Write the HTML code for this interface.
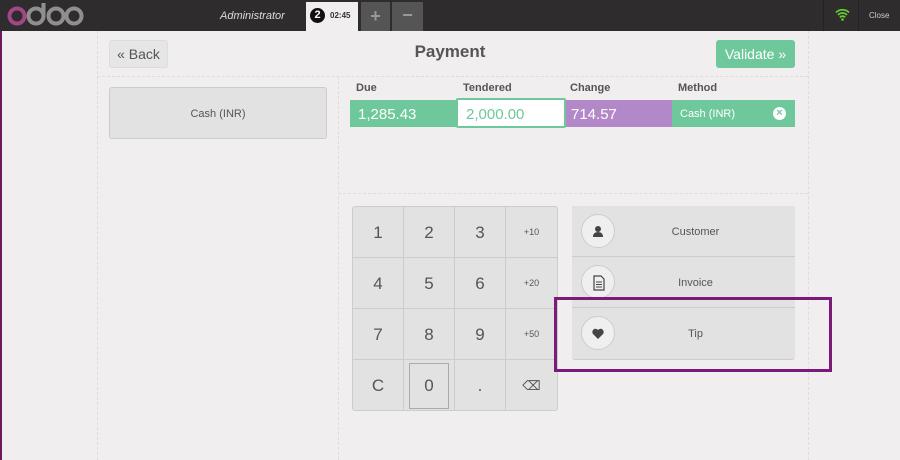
<!DOCTYPE html>
<html><head><style>
*{box-sizing:border-box;margin:0;padding:0}
body{width:900px;height:460px;overflow:hidden;background:#f0eeee;font-family:"Liberation Sans",sans-serif;position:relative;color:#555}
.a{position:absolute}
.top{left:0;top:0;width:900px;height:31px;background:#2e2c2c}
.dv{border-left:1px dashed #ddd}
.dh{border-top:1px dashed #ddd}
.key{position:absolute;width:51px;height:51px;border-right:1px solid #ccc;border-bottom:1px solid #ccc;text-align:center;line-height:51px;font-size:17px;color:#555}
.btn{position:absolute;left:572px;width:223px;height:51px;border-bottom:1px solid #ccc;background:#e2e2e2}
.btn .c{position:absolute;left:9px;top:8px;width:34px;height:34px;border-radius:50%;background:#efefef;border:1px solid #ccc}
.btn span{position:absolute;left:0;right:0;text-align:center;top:20px;font-size:11px;color:#555;padding-left:24px}
</style></head><body>
<div class="a" style="left:0;top:31px;width:2px;height:429px;background:#6c1a5e"></div>
<div class="a top"></div>
<svg class="a" style="left:0;top:0" width="90" height="31" viewBox="0 0 90 31">
<g fill="none" stroke-width="4"><circle cx="17" cy="16" r="7.5" stroke="#a24689"/><circle cx="36" cy="16" r="7.5" stroke="#8f8f8f"/><path d="M43.5 3v13" stroke="#8f8f8f"/><circle cx="56" cy="16" r="7.5" stroke="#8f8f8f"/><circle cx="74" cy="16" r="7.5" stroke="#8f8f8f"/></g></svg>
<div class="a" style="left:220px;top:10px;font-size:11px;font-style:italic;color:#ddd">Administrator</div>
<div class="a" style="left:306px;top:2px;width:52px;height:29px;background:#f0eeee"></div>
<div class="a" style="left:310px;top:8px;width:15px;height:15px;border-radius:50%;background:#111;color:#fff;font-size:11px;font-weight:bold;text-align:center;line-height:15px">2</div>
<div class="a" style="left:330px;top:11px;font-size:8px;font-weight:bold;color:#333">02:45</div>
<div class="a" style="left:361px;top:2px;width:29px;height:29px;background:#555;color:#999;font-size:18px;font-weight:bold;text-align:center;line-height:29px">+</div>
<div class="a" style="left:392px;top:2px;width:31px;height:29px;background:#555;color:#999;font-size:18px;font-weight:bold;text-align:center;line-height:27px">−</div>
<div class="a" style="left:823px;top:0;width:1px;height:31px;background:#222"></div>
<div class="a" style="left:858px;top:0;width:1px;height:31px;background:#222"></div>
<svg class="a" style="left:835px;top:8px" width="15" height="13" viewBox="0 0 15 13"><path d="M1 4.5a9 9 0 0 1 13 0M3 7a6 6 0 0 1 9 0M5 9.5a3 3 0 0 1 5 0" stroke="#6c3" stroke-width="1.8" fill="none"/><circle cx="7.5" cy="11.5" r="1.3" fill="#6c3"/></svg>
<div class="a" style="left:869px;top:11px;font-size:8px;color:#ccc">Close</div>

<div class="a dv" style="left:97px;top:31px;height:429px"></div>
<div class="a dv" style="left:338px;top:76px;height:384px"></div>
<div class="a dv" style="left:808px;top:31px;height:429px"></div>
<div class="a dh" style="left:97px;top:76px;width:711px"></div>
<div class="a dh" style="left:338px;top:193px;width:470px"></div>

<div class="a" style="left:109px;top:40px;width:59px;height:28px;border:1px solid #ddd;background:#e6e6e6;border-radius:3px;font-size:14px;color:#555;line-height:26px;text-align:center">« Back</div>
<div class="a" style="left:0;width:900px;top:42px;text-align:center;font-size:17px;font-weight:bold;color:#555">Payment</div>
<div class="a" style="left:716px;top:40px;width:79px;height:28px;background:#6ec89b;border-radius:3px;color:#fff;font-size:14px;line-height:28px;text-align:center">Validate »</div>

<div class="a" style="left:109px;top:87px;width:218px;height:52px;background:#e2e2e2;border:1px solid #ccc;border-radius:3px;font-size:11px;text-align:center;line-height:52px;color:#555">Cash (INR)</div>

<div class="a" style="left:356px;top:82px;font-size:11px;font-weight:bold;color:#555">Due</div>
<div class="a" style="left:463px;top:82px;font-size:11px;font-weight:bold;color:#555">Tendered</div>
<div class="a" style="left:570px;top:82px;font-size:11px;font-weight:bold;color:#555">Change</div>
<div class="a" style="left:678px;top:82px;font-size:11px;font-weight:bold;color:#555">Method</div>
<div class="a" style="left:350px;top:100px;width:445px;height:27px;background:#6ec89b"></div>
<div class="a" style="left:358px;top:106px;color:#fff;font-size:15px">1,285.43</div>
<div class="a" style="left:456px;top:98px;width:110px;height:30px;background:#fff;border:2px solid #6ec89b;border-radius:2px;color:#6ec89b;font-size:15px;padding:6px 0 0 8px">2,000.00</div>
<div class="a" style="left:566px;top:100px;width:106px;height:27px;background:#b388c9;color:#fff;font-size:15px;padding:6px 0 0 5px">714.57</div>
<div class="a" style="left:680px;top:108px;color:#fff;font-size:11px">Cash (INR)</div>
<div class="a" style="left:773px;top:107px;width:13px;height:13px;border-radius:50%;background:#fff;color:#6ec89b;font-size:11px;font-weight:bold;text-align:center;line-height:13px">×</div>

<div class="a" style="left:352px;top:206px;width:206px;height:205px;background:#e2e2e2;border:1px solid #ccc;border-radius:3px;overflow:hidden">
<div class="key" style="left:0;top:0">1</div><div class="key" style="left:51px;top:0">2</div><div class="key" style="left:102px;top:0">3</div><div class="key" style="left:153px;top:0;font-size:9px;border-right:0">+10</div>
<div class="key" style="left:0;top:51px">4</div><div class="key" style="left:51px;top:51px">5</div><div class="key" style="left:102px;top:51px">6</div><div class="key" style="left:153px;top:51px;font-size:9px;border-right:0">+20</div>
<div class="key" style="left:0;top:102px">7</div><div class="key" style="left:51px;top:102px">8</div><div class="key" style="left:102px;top:102px">9</div><div class="key" style="left:153px;top:102px;font-size:9px;border-right:0">+50</div>
<div class="key" style="left:0;top:153px;border-bottom:0">C</div><div class="key" style="left:51px;top:153px;border-bottom:0"><div style="position:absolute;left:5px;top:3px;width:40px;height:46px;border:1px solid #aaa;line-height:44px">0</div></div><div class="key" style="left:102px;top:153px;border-bottom:0">.</div><div class="key" style="left:153px;top:153px;border:0;font-size:13px">⌫</div>
</div>

<div class="a" style="left:572px;top:206px;width:223px;height:154px;border:1px solid #ccc;border-radius:3px;background:#e2e2e2"></div>
<div class="btn" style="top:206px"><div class="c"><svg width="34" height="34"><circle cx="16" cy="14" r="3" fill="#444"/><path d="M11 22q0-5 5-5t5 5z" fill="#444"/></svg></div><span>Customer</span></div>
<div class="btn" style="top:257px"><div class="c"><svg width="34" height="34"><path d="M12 10h7l3 3v11h-10z" fill="none" stroke="#444" stroke-width="1.2"/><path d="M14 16h6M14 18.5h6M14 21h6" stroke="#444"/></svg></div><span>Invoice</span></div>
<div class="btn" style="top:308px;border-bottom:0"><div class="c"><svg width="34" height="34"><path d="M16 22l-5-5a3 3 0 0 1 5-4a3 3 0 0 1 5 4z" fill="#444"/></svg></div><span>Tip</span></div>

<div class="a" style="left:554px;top:297px;width:278px;height:75px;border:3px solid #7b1a7b"></div>
</body></html>
